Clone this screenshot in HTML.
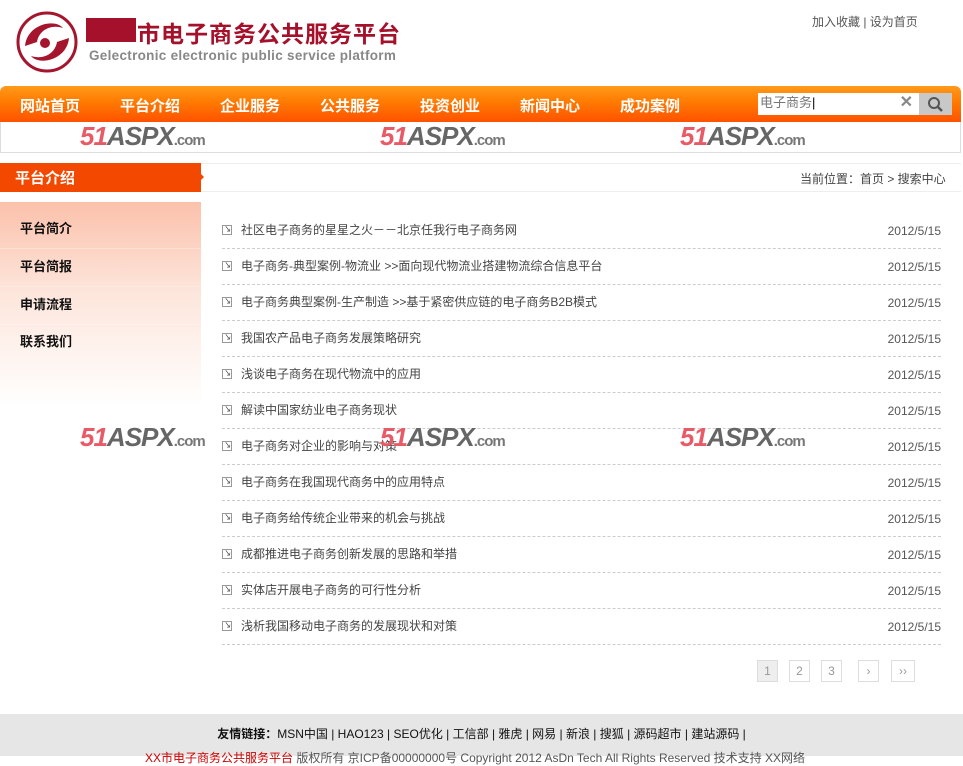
<!DOCTYPE html>
<html><head><meta charset="utf-8"><style>
*{margin:0;padding:0;box-sizing:border-box}
body{width:963px;height:756px;overflow:hidden;background:#fff;font-family:"Liberation Sans","Noto Sans CJK SC",sans-serif;position:relative;font-size:12px;color:#333}
.a{position:absolute}
.nav{left:0;top:86px;width:961px;height:36px;background:linear-gradient(#ff9a1a,#ff7a00 45%,#ff5200);border-radius:6px 6px 0 0}
.nav span{position:absolute;top:9px;color:#fff;font-size:15px;font-weight:bold}
.wm{font:italic bold 26px "Liberation Sans",sans-serif;color:#e85a66;letter-spacing:-1px}
.wm b{color:#666}
.wm i{font-size:15px;color:#777;font-style:normal;font-weight:bold}
.side div{position:absolute;left:20px;font-size:13px;font-weight:bold;color:#111}
.row{position:absolute;left:222px;width:719px;height:36px;border-bottom:1px dashed #ccc}
.row .ic{position:absolute;left:0;top:12px;width:10px;height:10px;border:1px solid #999;font-size:8px;line-height:8px;text-align:center;color:#333}
.row .t{position:absolute;left:19px;top:8px;font-size:12px;color:#444}
.row .d{position:absolute;right:0;top:11px;font-size:12px;color:#555;line-height:14px}
.pg{position:absolute;top:660px;width:21px;height:22px;border:1px solid #ddd;color:#999;font-size:12px;text-align:center;line-height:20px}
</style></head><body>
<svg class="a" style="left:15px;top:10px" width="64" height="64" viewBox="0 0 64 64"><circle cx="32" cy="32" r="29" fill="none" stroke="#a5152e" stroke-width="3"/><path d="M10 36 C12 14 40 8 48 18 C36 14 24 20 22 32 Z" fill="#a5152e"/><path d="M54 28 C52 50 24 56 16 46 C28 50 40 44 42 32 Z" fill="#a5152e"/><circle cx="30" cy="33" r="5" fill="#a5152e"/></svg>
<div class="a" style="left:86px;top:18px;width:50px;height:24px;background:#a5102a"></div>
<div class="a" style="left:137px;top:15px;font-size:23px;font-weight:bold;color:#a5102a;letter-spacing:1px">市电子商务公共服务平台</div>
<div class="a" style="left:89px;top:48px;font-size:13.5px;font-weight:bold;color:#888;letter-spacing:.3px">Gelectronic electronic public service platform</div>
<div class="a" style="left:812px;top:13px;font-size:12px;color:#555">加入收藏 | 设为首页</div>
<div class="a nav">
<span style="left:20px">网站首页</span><span style="left:120px">平台介绍</span><span style="left:220px">企业服务</span><span style="left:320px">公共服务</span><span style="left:420px">投资创业</span><span style="left:520px">新闻中心</span><span style="left:620px">成功案例</span>
<div class="a" style="left:758px;top:7px;width:161px;height:22px;background:#fff;font-size:13px;color:#777;padding:2px 2px;line-height:16px">电子商务<span style="position:static;color:#000;font-weight:normal;font-size:13px">|</span><b style="position:absolute;right:6px;top:2px;color:#888;font-size:16px">✕</b></div>
<div class="a" style="left:919px;top:7px;width:33px;height:22px;background:#c8c8c8"><svg width="33" height="22"><circle cx="15" cy="10" r="5" fill="none" stroke="#555" stroke-width="2"/><line x1="19" y1="14" x2="23" y2="18" stroke="#555" stroke-width="2.5"/></svg></div>
</div>
<div class="a" style="left:0;top:122px;width:961px;height:31px;border:1px solid #ddd;border-top:none"></div>
<div class="a" style="left:0;top:163px;width:961px;height:29px;border-top:1px solid #eee;border-bottom:1px solid #eee"></div>
<div class="a" style="left:0;top:163px;width:201px;height:29px;background:#f24800;color:#fff;font-size:15px;font-weight:bold;padding:4px 15px">平台介绍</div>
<div class="a" style="left:200px;top:173px;width:0;height:0;border:4px solid transparent;border-left-color:#f24800"></div>
<div class="a" style="left:800px;top:170px;font-size:12px;color:#444">当前位置：首页 &gt; 搜索中心</div>
<div class="a side" style="left:0;top:202px;width:201px;height:205px;background:linear-gradient(#fbc1ab,#fde6dc 45%,#fff)">
<div style="top:16px">平台简介</div><div style="top:54px">平台简报</div><div style="top:92px">申请流程</div><div style="top:129px">联系我们</div>
<p class="a" style="left:0;top:46px;width:201px;border-top:1px solid #fbe0d5"></p><p class="a" style="left:0;top:84px;width:201px;border-top:1px solid #fde8e0"></p><p class="a" style="left:0;top:122px;width:201px;border-top:1px solid #fef0ea"></p>
</div>
<div class="row" style="top:213px"><i class="ic">↘</i><span class="t">社区电子商务的星星之火－－北京任我行电子商务网</span><span class="d">2012/5/15</span></div>
<div class="row" style="top:249px"><i class="ic">↘</i><span class="t">电子商务-典型案例-物流业 &gt;&gt;面向现代物流业搭建物流综合信息平台</span><span class="d">2012/5/15</span></div>
<div class="row" style="top:285px"><i class="ic">↘</i><span class="t">电子商务典型案例-生产制造 &gt;&gt;基于紧密供应链的电子商务B2B模式</span><span class="d">2012/5/15</span></div>
<div class="row" style="top:321px"><i class="ic">↘</i><span class="t">我国农产品电子商务发展策略研究</span><span class="d">2012/5/15</span></div>
<div class="row" style="top:357px"><i class="ic">↘</i><span class="t">浅谈电子商务在现代物流中的应用</span><span class="d">2012/5/15</span></div>
<div class="row" style="top:393px"><i class="ic">↘</i><span class="t">解读中国家纺业电子商务现状</span><span class="d">2012/5/15</span></div>
<div class="row" style="top:429px"><i class="ic">↘</i><span class="t">电子商务对企业的影响与对策</span><span class="d">2012/5/15</span></div>
<div class="row" style="top:465px"><i class="ic">↘</i><span class="t">电子商务在我国现代商务中的应用特点</span><span class="d">2012/5/15</span></div>
<div class="row" style="top:501px"><i class="ic">↘</i><span class="t">电子商务给传统企业带来的机会与挑战</span><span class="d">2012/5/15</span></div>
<div class="row" style="top:537px"><i class="ic">↘</i><span class="t">成都推进电子商务创新发展的思路和举措</span><span class="d">2012/5/15</span></div>
<div class="row" style="top:573px"><i class="ic">↘</i><span class="t">实体店开展电子商务的可行性分析</span><span class="d">2012/5/15</span></div>
<div class="row" style="top:609px"><i class="ic">↘</i><span class="t">浅析我国移动电子商务的发展现状和对策</span><span class="d">2012/5/15</span></div>
<div class="pg" style="left:757px;background:#eee">1</div><div class="pg" style="left:789px">2</div><div class="pg" style="left:821px">3</div><div class="pg" style="left:858px">›</div><div class="pg" style="left:891px;width:24px">››</div>
<div class="a wm" style="left:80px;top:121px">51<b>ASPX</b><i>.com</i></div>
<div class="a wm" style="left:380px;top:121px">51<b>ASPX</b><i>.com</i></div>
<div class="a wm" style="left:680px;top:121px">51<b>ASPX</b><i>.com</i></div>
<div class="a wm" style="left:80px;top:422px">51<b>ASPX</b><i>.com</i></div>
<div class="a wm" style="left:380px;top:422px">51<b>ASPX</b><i>.com</i></div>
<div class="a wm" style="left:680px;top:422px">51<b>ASPX</b><i>.com</i></div>
<div class="a" style="left:0;top:714px;width:963px;height:42px;background:#e6e6e6"></div>
<div class="a" style="left:0;top:725px;width:963px;text-align:center;font-size:12px;color:#111"><b>友情链接：</b>MSN中国 | HAO123 | SEO优化 | 工信部 | 雅虎 | 网易 | 新浪 | 搜狐 | 源码超市 | 建站源码 |</div>
<div class="a" style="left:145px;top:749px;font-size:12px;color:#555;white-space:nowrap"><span style="color:#c00">XX市电子商务公共服务平台</span> 版权所有 京ICP备00000000号 Copyright 2012 AsDn Tech All Rights Reserved 技术支持 XX网络</div>
</body></html>
